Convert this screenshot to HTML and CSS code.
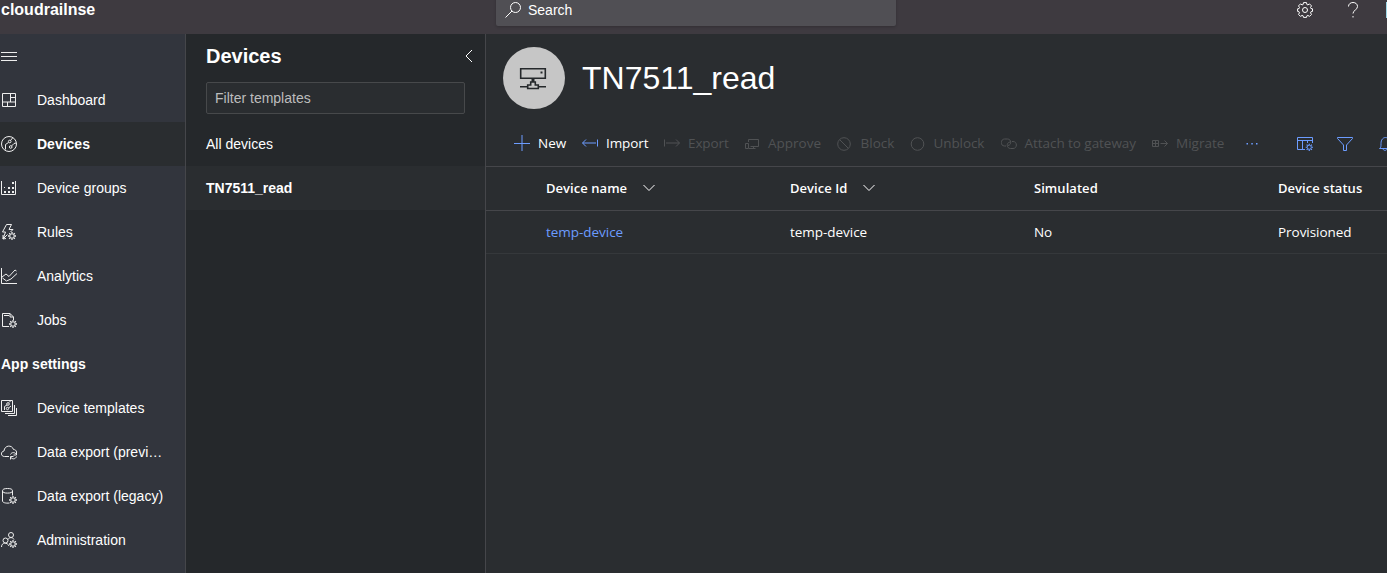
FILE: index.html
```html
<!DOCTYPE html>
<html lang="en">
<head>
<meta charset="utf-8">
<title>cloudrailnse</title>
<link rel="stylesheet" href="styles.css">
</head>
<body>
<svg class="defs" width="0" height="0">
  <symbol id="gear" viewBox="0 0 16 16"><path d="M6.500.6h3l.4 1.900 1 .4 1.600-1 2 2-1 1.600.4 1 1.600.3v2.600l-1.600.4-.4 1 1 1.600-2 2-1.600-1-1 .4-.4 1.600h-3l-.4-1.600-1-.4-1.600 1-2-2 1-1.600-.4-1L.6 9.400V6.800l1.500-.3.4-1-1-1.600 2-2 1.600 1 1-.4z"/><circle cx="8" cy="8" r="2.500"/></symbol>
  <symbol id="minigear" viewBox="0 0 8 8"><circle cx="4" cy="4" r="2.200"/><path stroke-width="1.300" d="M4 0v1.600M4 6.400V8M0 4h1.600M6.400 4H8M1.200 1.200l1.100 1.100M5.700 5.700l1.100 1.100M1.200 6.800l1.100-1.100M5.700 2.300l1.100-1.100"/></symbol>
</svg>
<header class="top">
  <div class="brand">cloudrailnse</div>
  <div class="search">
    <svg class="icon" viewBox="0 0 16 16"><circle cx="10.500" cy="5.500" r="5"/><path d="M7 9L.5 15.500"/></svg>
    <span>Search</span>
  </div>
  <div class="top-tools">
    <svg class="icon"><use href="#gear"/></svg>
    <svg class="icon help" viewBox="0 0 16 16"><path d="M3.500 4.500C3.500 2 5.500.5 8 .5s4.500 1.500 4.500 4c0 3.500-4.500 3.700-4.500 7M8 14v1.500"/></svg>
    <div class="avatar"></div>
  </div>
</header>
<div class="body">
  <nav class="side">
    <div class="item"><svg class="icon" viewBox="0 0 16 16"><path d="M0 4.500h16M0 8.500h16M0 12.500h16"/></svg></div>
    <div class="item"><svg class="icon" viewBox="0 0 16 16"><path d="M1.500 1.500h13v13h-13zM9.500 1.500v8.500M1 10h14M10 5.500h4.500M6.500 10v4.500"/></svg><span>Dashboard</span></div>
    <div class="item active"><svg class="icon" viewBox="0 0 16 16"><circle cx="8" cy="8" r="7.500"/><circle cx="8.700" cy="5.500" r="1.300"/><circle cx="9.700" cy="11" r="1.300"/><path d="M7.500 6.500L4.500 8.500v5M10.500 10l2.500-2.500 2-.5M9.500 4.500l2-2.500"/></svg><span>Devices</span></div>
    <div class="item"><svg class="icon" viewBox="0 0 16 16"><path d="M.5 1v13.500h14V1"/><path class="solid" d="M3 11h2v2H3zM7 11h2v2H7zM11 11h2v2h-2zM7 7h2v2H7zM11 7h2v2h-2zM11 2h2v2h-2zM3 7h1v1H3z"/></svg><span>Device groups</span></div>
    <div class="item"><svg class="icon" viewBox="0 0 16 16"><path d="M10.500.5H5.500l-4 7.500h3L2 15l4.500-4.500M10.500.5L8 5.500h4L9.500 8M2 11v4l3-.500"/><use href="#minigear" x="7" y="8" width="8" height="8"/></svg><span>Rules</span></div>
    <div class="item"><svg class="icon" viewBox="0 0 16 16"><path d="M.5 0v15.500H16M1 9l4-3 3 2.500 6-6.500 1.500 1M1.500 10l4 3L10 11l6-5.500"/></svg><span>Analytics</span></div>
    <div class="item"><svg class="icon" viewBox="0 0 16 16"><path d="M8 14.500H1.500v-13H9l3.500 3.500v3M9 1.500V5h3.500M3 3.500h5"/><use href="#minigear" x="8" y="8" width="8" height="8"/></svg><span>Jobs</span></div>
    <div class="item heading">App settings</div>
    <div class="item"><svg class="icon" viewBox="0 0 16 16"><path d="M.5.500h11v11H.5zM13.500 5v8.500H4M15.500 8v7.500H7M3.500 10V6.500L6 5M7.500 8l2.500-2M8 2.500l1.500-1.500"/><circle cx="7" cy="4" r="1.300"/><circle cx="6.500" cy="8.500" r="1.200"/></svg><span>Device templates</span></div>
    <div class="item"><svg class="icon" viewBox="0 0 16 16"><path d="M8 12.500H3.500C-.5 12.500-.5 7.500 3 7 3.500 1 11 .5 12.500 5.500c1.500 0 3 1 3 2.500M9.500 10.500c1-2.500 4.500-2.500 6 0M15.500 8v3h-3M15.500 12.500c-1 3-4.500 3-6 .5M9.500 15.500v-3h3"/></svg><span>Data export (previ…</span></div>
    <div class="item"><svg class="icon" viewBox="0 0 16 16"><ellipse cx="6.500" cy="2.800" rx="5" ry="2.300"/><path d="M1.500 3v10c0 1.500 3 2.500 7 2M11.500 3v4.500"/><use href="#minigear" x="8" y="8" width="8" height="8"/></svg><span>Data export (legacy)</span></div>
    <div class="item"><svg class="icon" viewBox="0 0 16 16"><circle cx="10" cy="3" r="2.500"/><circle cx="4.500" cy="8.500" r="2.500"/><path d="M.5 15c0-5 6-5 7.500-1M7 7.500c1-2.500 5-2.500 6 0"/><use href="#minigear" x="8" y="8" width="8" height="8"/></svg><span>Administration</span></div>
  </nav>
  <aside class="panel">
    <div class="panel-head"><h2>Devices</h2><svg class="collapse" viewBox="0 0 8 14"><path d="M7 1L1 7l6 6"/></svg></div>
    <div class="filter">Filter templates</div>
    <div class="tpl">All devices</div>
    <div class="tpl chosen">TN7511_read</div>
  </aside>
  <main class="main">
    <div class="title">
      <div class="disc"><svg viewBox="0 0 28 24"><path d="M1.700 1.700h24.600v9.600H1.700zM1 19.700h7.500M19.500 19.700H27M8.700 18h3V15h1.600v-3.500h1.400V15h1.600v3h3v3.500H8.700z"/><path class="dot" d="M21.500 4.500h2v2h-2z"/></svg></div>
      <h1>TN7511_read</h1>
    </div>
    <div class="bar">
      <div class="cmd new"><svg class="icon" viewBox="0 0 16 16"><path d="M8 0v16M0 8.500h16"/></svg><span>New</span></div>
      <div class="cmd import"><svg class="icon" viewBox="0 0 16 16"><path d="M15.500 4.500v7M14 8H.7M4 4.500L.5 8 4 11.500"/></svg><span>Import</span></div>
      <div class="cmd off export"><svg class="icon" viewBox="0 0 16 16"><path d="M.5 4.500v7M2 8h13.300M12 4.500L15.500 8 12 11.500"/></svg><span>Export</span></div>
      <div class="cmd off approve"><svg class="icon" viewBox="0 0 16 16"><path d="M4.500 7V4.500h10v7h-8M1.500 8.500h3v5h-3zM5 13.500h6.500M9.500 11.500v2"/></svg><span>Approve</span></div>
      <div class="cmd off block"><svg class="icon" viewBox="0 0 16 16"><circle cx="7" cy="9" r="6.300"/><path d="M2.800 4.800l8.400 8.400"/></svg><span>Block</span></div>
      <div class="cmd off unblock"><svg class="icon" viewBox="0 0 16 16"><circle cx="7.500" cy="9" r="6.300"/></svg><span>Unblock</span></div>
      <div class="cmd off attach"><svg class="icon" viewBox="0 0 16 16"><path d="M5 11H3.500C-1 11-.5 4 3.500 4H6.500c4 0 4.500 6 .5 6.500M11 6.500h1c4.500 0 4.500 7 0 7H9.500c-4 0-4.500-6-.5-6.500"/></svg><span>Attach to gateway</span></div>
      <div class="cmd off migrate"><svg class="icon" viewBox="0 0 16 16"><path d="M.5 5.500h6v6h-6zM3.500 5.500v6M.5 8.500h6M8.500 8.500h7M12.500 5.500l3 3-3 3"/></svg><span>Migrate</span></div>
      <svg class="icon more" viewBox="0 0 16 16"><path class="solid" d="M2.500 8h1.500v1.500H2.500zM7.300 8h1.500v1.500H7.300zM12 8h1.500v1.500H12z"/></svg>
      <div class="view-tools">
        <svg class="icon" viewBox="0 0 16 16"><path d="M8 14.500H.5v-12h15V8M.5 5.500h15M5.500 5.500v9M10.500 5.500V8"/><use href="#minigear" x="8.500" y="8.500" width="7.500" height="7.500"/></svg>
        <svg class="icon" viewBox="0 0 16 16"><path d="M.5 2.500h15v1L9.500 10v5.500h-3V10L.5 3.500z"/></svg>
        <svg class="icon bell" viewBox="0 0 16 16"><path d="M2.500 13.500h12c-1.500-1-1.500-2-1.500-5 0-8-9-8-9 0 0 3 0 4-1.500 5M6 13.500c0 2.500 4 2.500 4 0"/></svg>
      </div>
    </div>
    <div class="grid head">
      <div><span>Device name</span><svg class="chev" viewBox="0 0 12 8"><path d="M.5 1L6 6.500 11.500 1"/></svg></div>
      <div><span>Device Id</span><svg class="chev" viewBox="0 0 12 8"><path d="M.5 1L6 6.500 11.500 1"/></svg></div>
      <div>Simulated</div>
      <div>Device status</div>
    </div>
    <div class="grid row">
      <div class="link">temp-device</div>
      <div>temp-device</div>
      <div>No</div>
      <div>Provisioned</div>
    </div>
  </main>
</div>
</body>
</html>
```
FILE: styles.css
```css
* { box-sizing: border-box; }
body { margin: 0; height: 573px; overflow: hidden; display: flex; flex-direction: column; background: #2a2d30; color: #fff; font: 14px "Liberation Sans", Arial, sans-serif; }
svg { fill: none; stroke: currentColor; stroke-width: 1; flex: none; }
.defs { position: absolute; }
.icon { width: 16px; height: 16px; }
.solid { fill: currentColor; stroke: none; }

.top { flex: none; height: 48px; margin-top: -14px; background: #3e3a40; display: flex; align-items: center; }
.brand { width: 496px; padding-left: 1px; font-size: 16px; font-weight: bold; line-height: 20px; }
.search { width: 400px; height: 32px; padding-left: 9px; background: #504f54; border-radius: 2px; box-shadow: 0 1px 3px rgba(0,0,0,.2); display: flex; align-items: center; gap: 7px; }
.top-tools { flex: 1; display: flex; align-items: center; justify-content: flex-end; gap: 32px; }
.top-tools .help { margin-right: -7px; }
.avatar { width: 1px; height: 16px; background: #9fd8e8; }

.body { flex: 1; display: flex; min-height: 0; }
.side { width: 186px; flex: none; background: #32353d; border-right: 1px solid #45464a; }
.item { height: 44px; padding-left: 1px; display: flex; align-items: center; gap: 20px; white-space: nowrap; }
.item .icon { color: #eee; }
.active { background: #2a2d30; }
.active, .heading { font-weight: bold; }

.panel { width: 300px; flex: none; background: #25282b; border-right: 1px solid #45464a; }
.panel-head { height: 48px; padding: 0 12px 4px 20px; display: flex; align-items: center; justify-content: space-between; }
h2 { margin: 0; font-size: 20px; line-height: 24px; }
.collapse { width: 8px; height: 14px; }
.filter { margin: 0 20px 8px; height: 32px; padding-left: 8px; border: 1px solid #47494b; border-radius: 2px; background: #2a2d30; color: #bdbdbd; line-height: 30px; }
.tpl { height: 44px; padding-left: 20px; line-height: 44px; }
.chosen { background: #2a2d30; font-weight: bold; }

.main { flex: 1; min-width: 0; overflow: hidden; }
.title { height: 88px; padding-left: 17px; display: flex; align-items: center; gap: 17px; }
.disc { width: 62px; height: 62px; border-radius: 50%; background: #c6c6c6; display: flex; align-items: center; justify-content: center; color: #25282b; }
.disc svg { width: 28px; height: 24px; margin: 2px 2px 0 0; stroke-width: 1.600; }
.dot { fill: currentColor; stroke: none; }
h1 { margin: 0; font-size: 32px; font-weight: normal; }

.bar { height: 45px; padding: 0 0 2px 28px; border-bottom: 1px solid #45464a; display: flex; align-items: center; gap: 16px; font-family: "Open Sans", "Noto Sans", sans-serif; font-size: 13.500px; }
.cmd { display: flex; align-items: center; gap: 8px; white-space: nowrap; flex: none; }
.cmd .icon { color: #6c9cff; }
.cmd.off, .cmd.off .icon { color: #505254; }
.new { width: 52px; }
.import { width: 66px; letter-spacing: -.1px; }
.export { width: 64px; letter-spacing: -.1px; }
.approve { width: 76.500px; }
.block { width: 57px; }
.unblock { width: 75px; letter-spacing: -.1px; }
.attach { width: 135.500px; letter-spacing: -.05px; }
.migrate { width: 72px; }
.more { color: #6c9cff; margin-left: 4px; }
.view-tools { margin-left: 21px; display: flex; gap: 24px; color: #6c9cff; }

.grid { display: grid; grid-template-columns: repeat(4, 244px); padding-left: 60px; align-items: center; font-family: "Open Sans", "Noto Sans", sans-serif; font-size: 13px; white-space: nowrap; }
.head { height: 44px; padding-bottom: 2px; border-bottom: 1px solid #45464a; font-weight: 600; letter-spacing: .05px; }
.head > div { display: flex; align-items: center; gap: 16px; }
.chev { width: 12px; height: 8px; }
.row { height: 43px; border-bottom: 1px solid #35383b; font-size: 13.500px; letter-spacing: -.04px; }
.link { color: #6c9cff; }
```
